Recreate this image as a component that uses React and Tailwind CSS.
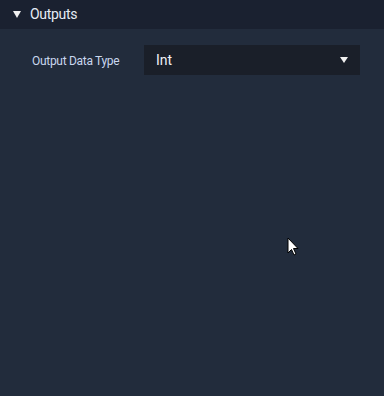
export default function App() {
  return (
    <div className="relative w-[384px] h-[396px] bg-[#222c3c] overflow-hidden" style={{ fontFamily: "Roboto, 'Liberation Sans', sans-serif" }}>
      <div className="h-[29px] bg-[#1a2130] flex items-center pl-[13px]">
        <svg width="8" height="7" viewBox="0 0 8 7" className="mr-[9px]">
          <polygon points="0,0 8,0 4,7" fill="#f0f0f0" />
        </svg>
        <span className="text-[14px] tracking-[-0.3px] text-[#e6ecf5]">Outputs</span>
      </div>
      <div className="flex items-center mt-[16px] pl-[32px]">
        <div className="w-[112px] text-[12px] tracking-[-0.3px] text-[#c9d7ee] pt-[1px]">Output Data Type</div>
        <div className="w-[216px] h-[30px] bg-[#1a1f29] flex items-center justify-between pl-[12px] pr-[12px]">
          <span className="text-[14px] text-[#eef1f6] pt-[1px]">Int</span>
          <svg width="8" height="6" viewBox="0 0 8 6">
            <polygon points="0,0 8,0 4,6" fill="#f0f0f0" />
          </svg>
        </div>
      </div>
      <svg className="absolute left-[287px] top-[237px]" width="13" height="20" viewBox="0 0 13 20">
        <path d="M1 1 L1 16 L4.5 12.5 L7 18 L9 17 L6.5 11.5 L11 11.5 Z" fill="#fff" stroke="#000" strokeWidth="1" />
      </svg>
    </div>
  );
}
